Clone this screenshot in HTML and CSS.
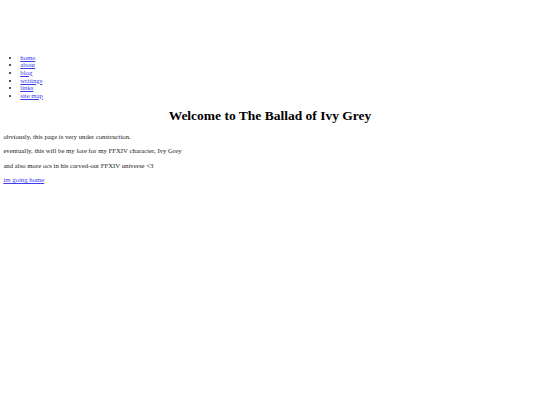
FILE: index.html
```html
<!DOCTYPE html>
<html lang="en">
<head>
<meta charset="utf-8">
<title>The Ballad of Ivy Grey</title>
<link rel="stylesheet" href="styles.css">
</head>
<body>
<div class="banner"></div>
<ul class="nav">
  <li><a href="#">home</a></li>
  <li><a href="#">about</a></li>
  <li><a href="#">blog</a></li>
  <li><a href="#">writings</a></li>
  <li><a href="#">links</a></li>
  <li><a href="#">site map</a></li>
</ul>
<h1 class="title">Welcome to The Ballad of Ivy Grey</h1>
<p>obviously, this page is very under construction.</p>
<p>eventually, this will be my lore for my FFXIV character, Ivy Grey</p>
<p>and also more ocs in his carved-out FFXIV universe &lt;3</p>
<p><a href="#">im going home</a></p>
</body>
</html>
```

FILE: styles.css
```css
body {
  margin: 3.375px;
  font-family: "Liberation Serif", "Times New Roman", serif;
  font-size: 6.75px;
  line-height: 7.6px;
  color: #1a1a1a;
  background: #fff;
}
.banner {
  height: 43.6px;
}
.nav {
  margin: 6.75px 0;
  padding-left: 16.875px;
}
.title {
  text-align: center;
  font-size: 13.5px;
  line-height: 15.6px;
  margin: 9.05px 0;
  color: #000;
}
p {
  margin: 6.75px 0;
}
a {
  color: #3c3cee;
}
```
